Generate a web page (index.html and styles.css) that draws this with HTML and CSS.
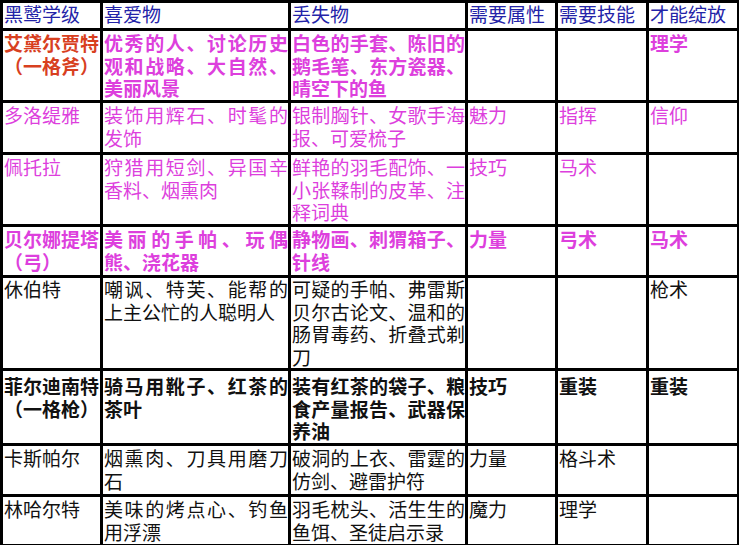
FILE: index.html
```html
<!DOCTYPE html>
<html lang="zh-CN">
<head>
<meta charset="utf-8">
<title>黑鹫学级</title>
<link rel="stylesheet" href="styles.css">
</head>
<body>
<table class="grid">
  <colgroup>
    <col class="c1"><col class="c2"><col class="c3"><col class="c4"><col class="c5"><col class="c6">
  </colgroup>
  <tr class="head">
    <td>黑鹫学级</td><td>喜爱物</td><td>丢失物</td><td>需要属性</td><td>需要技能</td><td>才能绽放</td>
  </tr>
  <tr class="r1 pink bold">
    <td class="red">艾黛尔贾特（一格斧）</td>
    <td class="jus">优秀的人、讨论历史观和战略、大自然、美丽风景</td>
    <td class="jus">白色的手套、陈旧的鹅毛笔、东方瓷器、晴空下的鱼</td>
    <td></td><td></td><td>理学</td>
  </tr>
  <tr class="r2 pink">
    <td>多洛缇雅</td>
    <td class="jus">装饰用辉石、时髦的发饰</td>
    <td class="jus">银制胸针、女歌手海报、可爱梳子</td>
    <td>魅力</td><td>指挥</td><td>信仰</td>
  </tr>
  <tr class="r3 pink">
    <td>佩托拉</td>
    <td class="jus">狩猎用短剑、异国辛香料、烟熏肉</td>
    <td class="jus">鲜艳的羽毛配饰、一小张鞣制的皮革、注释词典</td>
    <td>技巧</td><td>马术</td><td></td>
  </tr>
  <tr class="r4 pink bold">
    <td>贝尔娜提塔（弓）</td>
    <td class="jus">美丽的手帕、玩偶熊、浇花器</td>
    <td class="jus">静物画、刺猬箱子、针线</td>
    <td>力量</td><td>弓术</td><td>马术</td>
  </tr>
  <tr class="r5">
    <td>休伯特</td>
    <td class="jus">嘲讽、特芙、能帮的上主公忙的人聪明人</td>
    <td class="jus">可疑的手帕、弗雷斯贝尔古论文、温和的肠胃毒药、折叠式剃刀</td>
    <td></td><td></td><td>枪术</td>
  </tr>
  <tr class="r6 bold">
    <td>菲尔迪南特（一格枪）</td>
    <td class="jus">骑马用靴子、红茶的茶叶</td>
    <td class="jus">装有红茶的袋子、粮食产量报告、武器保养油</td>
    <td>技巧</td><td>重装</td><td>重装</td>
  </tr>
  <tr class="r7">
    <td>卡斯帕尔</td>
    <td class="jus">烟熏肉、刀具用磨刀石</td>
    <td class="jus">破洞的上衣、雷霆的仿剑、避雷护符</td>
    <td>力量</td><td>格斗术</td><td></td>
  </tr>
  <tr class="r8">
    <td>林哈尔特</td>
    <td class="jus">美味的烤点心、钓鱼用浮漂</td>
    <td class="jus">羽毛枕头、活生生的鱼饵、圣徒启示录</td>
    <td>魔力</td><td>理学</td><td></td>
  </tr>
</table>
</body>
</html>
```
FILE: styles.css
```css
html, body {
  margin: 0;
  padding: 0;
  background: #ffffff;
}
body {
  font-family: "Noto Sans CJK SC", "Noto Sans", sans-serif;
  font-size: 19px;
  line-height: 22.5px;
  color: #111111;
}
.grid {
  border-collapse: collapse;
  table-layout: fixed;
  width: 737px;
  margin: 0;
}
.c1 { width: 100px; }
.c2 { width: 188px; }
.c3 { width: 177px; }
.c4 { width: 90px; }
.c5 { width: 91px; }
.c6 { width: 91px; }
.grid td {
  border: 3px solid #000000;
  padding: 1px 0 0 1px;
  vertical-align: top;
  text-align: left;
}
.grid td.jus {
  text-align: justify;
  text-justify: inter-character;
}
.head { height: 28px; }
.head td {
  color: #2323a8;
  padding-top: 0;
}
.r1 { height: 72px; }
.r2 { height: 52px; }
.r3 { height: 72px; }
.r4 { height: 51px; }
.r5 { height: 93px; }
.r5 td { padding-top: 0; }
.r6 { height: 75px; }
.r6 td { padding-top: 4px; }
.r7 { height: 51px; }
.r8 { height: 50px; }
.pink { color: #dd3fdd; }
.bold { font-weight: 700; }
.grid td.red { color: #d8401f; }
```
